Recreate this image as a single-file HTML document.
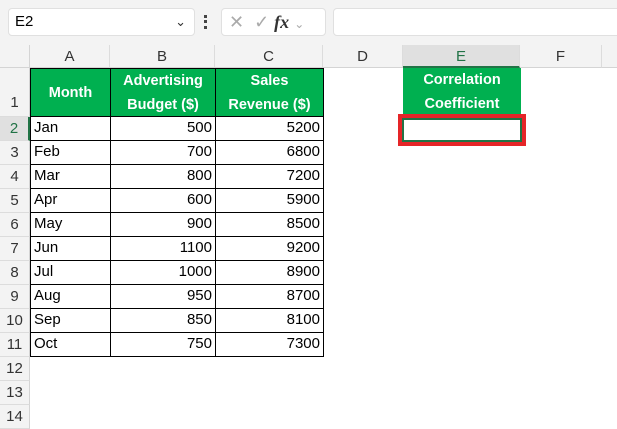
<!DOCTYPE html><html><head><style>
body{margin:0;width:617px;height:423px;overflow:hidden;background:#fff;font-family:"Liberation Sans",Arial,sans-serif;position:relative}
div{position:absolute;box-sizing:border-box}
.top{left:0;top:0;width:617px;height:45px;background:#f3f3f3}
.box{background:#fff;border:1px solid #e0e0e0;border-radius:4px}
.ch{top:45px;height:23px;background:#f3f3f3;border-right:1px solid #dcdcdc;border-bottom:1px solid #d4d4d4;text-align:center;font-size:15px;line-height:23px;color:#333}
.rh{left:0;width:30px;background:#f3f3f3;border-bottom:1px solid #dcdcdc;border-right:1px solid #d4d4d4;text-align:center;font-size:15px;color:#333}
.c{border:1px solid #000;font-size:15px;line-height:22px;padding:0 3px;color:#000}
.g{background:#00b050;color:#fff;font-weight:bold;text-align:center;font-size:14.5px;line-height:24px;border:1px solid #000}
</style></head><body>
<div class="top"></div>
<div class="box" style="left:8px;top:8px;width:187px;height:28px;font-size:15px;line-height:26px;padding-left:6px">E2<span style="position:absolute;right:8px;top:0;color:#333;font-size:13px">&#8964;</span></div>
<div style="left:204px;top:15px;width:3px;height:14px;border-left:3px dotted #444"></div>
<div class="box" style="left:221px;top:8px;width:105px;height:28px;color:#aaa;font-size:18px;line-height:26px;padding-left:7px">✕ &nbsp;✓ <i style="color:#333;font-family:'Liberation Serif',serif;font-weight:bold">fx</i> <span style="font-size:12px">&#8964;</span></div>
<div class="box" style="left:333px;top:8px;width:300px;height:28px"></div>
<div style="left:0;top:45px;width:30px;height:23px;background:#f3f3f3;border-right:1px solid #d4d4d4;border-bottom:1px solid #d4d4d4"></div>
<div class="ch" style="left:30px;width:80px">A</div>
<div class="ch" style="left:110px;width:105px">B</div>
<div class="ch" style="left:215px;width:108px">C</div>
<div class="ch" style="left:323px;width:80px">D</div>
<div class="ch" style="left:403px;width:117px;background:#e0e0e0;border-bottom:2px solid #217346;color:#217346">E</div>
<div class="ch" style="left:520px;width:82px">F</div>
<div class="ch" style="left:602px;width:20px"></div>
<div class="rh" style="top:68px;height:49px;line-height:70px">1</div>
<div class="rh" style="top:117px;height:24px;line-height:24px;background:#e0e0e0;color:#217346;border-right:2px solid #217346">2</div>
<div class="rh" style="top:141px;height:24px;line-height:24px">3</div>
<div class="rh" style="top:165px;height:24px;line-height:24px">4</div>
<div class="rh" style="top:189px;height:24px;line-height:24px">5</div>
<div class="rh" style="top:213px;height:24px;line-height:24px">6</div>
<div class="rh" style="top:237px;height:24px;line-height:24px">7</div>
<div class="rh" style="top:261px;height:24px;line-height:24px">8</div>
<div class="rh" style="top:285px;height:24px;line-height:24px">9</div>
<div class="rh" style="top:309px;height:24px;line-height:24px">10</div>
<div class="rh" style="top:333px;height:24px;line-height:24px">11</div>
<div class="rh" style="top:357px;height:24px;line-height:24px">12</div>
<div class="rh" style="top:381px;height:24px;line-height:24px">13</div>
<div class="rh" style="top:405px;height:24px;line-height:24px">14</div>
<div class="g" style="left:30px;top:68px;width:81px;height:49px;line-height:49px">Month</div>
<div class="g" style="left:110px;top:68px;width:106px;height:49px">Advertising<br>Budget ($)</div>
<div class="g" style="left:215px;top:68px;width:109px;height:49px">Sales<br>Revenue ($)</div>
<div class="g" style="left:403px;top:68px;width:118px;height:49px;border:none">Correlation<br>Coefficient</div>
<div style="left:398px;top:114px;width:128px;height:32px;border:4px solid #e52528"></div>
<div style="left:402px;top:118px;width:120px;height:24px;border:2px solid #217346"></div>
<div id="t"></div>
<script>
var d=[["Jan",500,5200],["Feb",700,6800],["Mar",800,7200],["Apr",600,5900],["May",900,8500],["Jun",1100,9200],["Jul",1000,8900],["Aug",950,8700],["Sep",850,8100],["Oct",750,7300]];
var h="";d.forEach(function(r,i){var y=116+i*24;
h+='<div class="c" style="left:30px;top:'+y+'px;width:81px;height:25px">'+r[0]+'</div>';
h+='<div class="c" style="left:110px;top:'+y+'px;width:106px;height:25px;text-align:right">'+r[1]+'</div>';
h+='<div class="c" style="left:215px;top:'+y+'px;width:109px;height:25px;text-align:right">'+r[2]+'</div>';});
document.getElementById("t").outerHTML=h;
</script>
</body></html>
